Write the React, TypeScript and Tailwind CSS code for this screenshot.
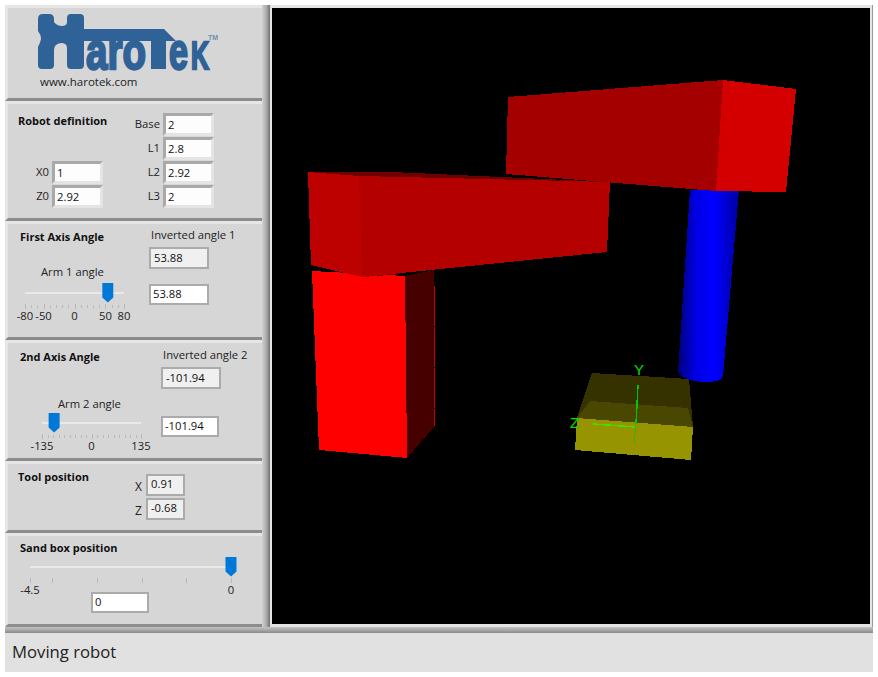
import React from "react";

const sans = "font-['Open_Sans',sans-serif]";

const Panel = ({ h, className = "", children }: { h: string; className?: string; children?: React.ReactNode }) => (
  <section
    className={`${h} ${className} relative border-t-[3px] border-l-[3px] border-b-[3px] border-t-[#e6e6e6] border-l-[#e6e6e6] border-b-[#8c8c8c] bg-[#d6d6d6]`}
  >
    {children}
  </section>
);

const Title = ({ className = "", children }: { className?: string; children: React.ReactNode }) => (
  <h3 className={`text-[11px] leading-[16px] font-bold whitespace-nowrap text-[#111] ${className}`}>{children}</h3>
);

// recessed numeric control
const Field = ({ label, value, labelW }: { label: string; value: string; labelW: string }) => (
  <div className="flex items-center h-[24px] shrink-0">
    <span className={`${labelW} text-right pr-[3px] text-[11.25px] text-[#222]`}>{label}</span>
    <div className="w-[51px] h-[23px] border-[3px] border-t-[#a9a9a9] border-l-[#a9a9a9] border-b-[#e4e4e4] border-r-[#e4e4e4] bg-[#fdfdfd] pl-[2px] text-[11.25px] leading-[17px] text-[#111]">
      {value}
    </div>
  </div>
);

const Readout = ({ value, className = "" }: { value: string; className?: string }) => (
  <div className={`border-2 border-[#ababab] bg-[#f0f0f0] pl-[3px] text-[11.25px] text-[#111] flex items-center ${className}`}>
    {value}
  </div>
);

const Entry = ({ value, className = "" }: { value: string; className?: string }) => (
  <div className={`border-2 border-[#ababab] bg-white pl-[2px] text-[11.25px] text-[#111] flex items-center ${className}`}>
    {value}
  </div>
);

type SliderProps = {
  width: number;
  min: number;
  max: number;
  value: number;
  ticks: number[];
  majors: number[];
  labels: { at: number; text: string }[];
};

const Slider = ({ width, min, max, value, ticks, majors, labels }: SliderProps) => {
  const pos = (v: number) => ((v - min) / (max - min)) * width;
  return (
    <div className="relative h-[40px]" style={{ width }}>
      <div className="absolute left-0 right-0 top-[9px] h-[2px] bg-[#e9e9e9]" />
      <svg className="absolute left-[-6px] top-0 z-10" style={{ transform: `translateX(${pos(value)}px)` }} width="12" height="20" viewBox="0 0 12 20">
        <path d="M0.5 0H11.5V14.5L6 19.5L0.5 14.5Z" fill="#0078d7" />
      </svg>
      {ticks.map((t) => (
        <div
          key={t}
          className={`absolute w-px bg-[#b9b9b9] ${majors.includes(t) ? "top-[21px] h-[5px]" : "top-[22px] h-[3px]"}`}
          style={{ left: pos(t) }}
        />
      ))}
      {labels.map((l) => (
        <span
          key={l.text}
          className="absolute top-[25px] -translate-x-1/2 text-[11.25px] leading-[16px] text-[#222]"
          style={{ left: pos(l.at) }}
        >
          {l.text}
        </span>
      ))}
    </div>
  );
};

const Logo = () => (
  <svg width="190" height="60" viewBox="38 12 190 60" className="block overflow-visible">
    <path
      d="M39 19Q39 14 44 14H50Q55 14 55 19V22Q58 26 63 26Q68 26 68 22V18Q68 14 72 14H81Q85 14 85 18V29H165L177 41H85V65Q85 69 81 69H72Q68 69 68 65V48Q68 43 62 43Q55 44 55 50V65Q55 69 51 69H43Q39 69 39 65V47Q42 41 42 38Q42 35 39 31Z"
      fill="#2f6397"
    />
    <rect x="152" y="38" width="15" height="31" fill="#2f6397" />
    <g fontFamily="'Liberation Sans',sans-serif" fontWeight="700" fill="#2f6397" stroke="#2f6397" strokeWidth="2.4">
      <text x="87" y="68.5" fontSize="52" textLength="60" lengthAdjust="spacingAndGlyphs">aro</text>
      <text x="170" y="68.5" fontSize="52" textLength="19" lengthAdjust="spacingAndGlyphs">e</text>
      <text x="192" y="68.5" fontSize="39" textLength="18" lengthAdjust="spacingAndGlyphs">K</text>
    </g>
    <text x="209" y="40" fontFamily="'Liberation Sans',sans-serif" fontWeight="700" fontSize="7" fill="#6f8fae">TM</text>
  </svg>
);

const Scene = () => (
  <svg width="598" height="616" viewBox="272 8 598 616" className="block" shapeRendering="crispEdges">
    <defs>
      <linearGradient id="cyl" x1="0" y1="0" x2="1" y2="0">
        <stop offset="0" stopColor="#00007a" />
        <stop offset="0.3" stopColor="#0000e6" />
        <stop offset="0.6" stopColor="#0000ff" />
        <stop offset="1" stopColor="#0000a0" />
      </linearGradient>
    </defs>

    {/* sand box */}
    <polygon points="592,373 689,379 693,427 691,460 575,450 577,418" fill="#353200" />
    <polygon points="590,401 688,408 693,427 577,418" fill="#4a4700" />
    <polygon points="577,418 693,427 691,460 575,450" fill="#969400" />
    <line x1="638" y1="385" x2="636" y2="424" stroke="#00c800" strokeWidth="1.5" />
    <line x1="636" y1="426" x2="634" y2="443" stroke="#38b000" strokeWidth="1" />
    <line x1="593" y1="424" x2="635" y2="427" stroke="#40e000" strokeWidth="1.5" />
    <g fontFamily="'Liberation Sans',sans-serif" fontSize="15" fill="#00e000">
      <text x="634" y="375">Y</text>
      <text x="570" y="428">Z</text>
    </g>

    {/* tool */}
    <path d="M690 190H739L723 376Q722 382 705 382Q682 381 678 372Z" fill="url(#cyl)" />

    {/* base column */}
    <polygon points="405,276 434,270 434,427 407,458" fill="#470000" />
    <polygon points="312,271 405,276 407,458 319,450" fill="#ff0000" />
    <line x1="434.5" y1="286" x2="434.5" y2="426" stroke="#c80000" strokeWidth="1" strokeDasharray="40 1" />

    {/* lower arm */}
    <polygon points="311,265 362,277 405,274 340,268" fill="#6a0000" />
    <polygon points="308,172 392,172 610,182 359,176" fill="#6e0000" />
    <polygon points="308,172 359,176 362,277 311,265" fill="#bd0000" />
    <polygon points="359,176 610,182 607,252 362,277" fill="#b50000" />

    {/* upper arm */}
    <polygon points="508,97 723,80 716,191 506,174" fill="#a50000" />
    <polygon points="723,80 796,89 786,192 716,191" fill="#d40000" />
  </svg>
);

const App = () => {
  return (
    <div className={`w-[878px] h-[677px] bg-white p-[5px] overflow-hidden ${sans}`}>
      <div className="flex h-[622px]">
        <div className="w-[257px] shrink-0 flex flex-col">
          <Panel h="h-[96px]" className="pl-[29px] pt-[4px]">
            <Logo />
            <p className="ml-[3px] mt-[3px] text-[11.5px] leading-[14px] text-[#222]">www.harotek.com</p>
          </Panel>

          <Panel h="h-[120px]" className="flex pt-[8px] pb-[10px]">
            <div className="w-[99px] shrink-0 flex flex-col justify-between">
              <Title className="pl-[10px] pt-[1px]">Robot definition</Title>
              <div>
                <Field label="X0" value="1" labelW="w-[44px]" />
                <Field label="Z0" value="2.92" labelW="w-[44px]" />
              </div>
            </div>
            <div>
              <Field label="Base" value="2" labelW="w-[56px]" />
              <Field label="L1" value="2.8" labelW="w-[56px]" />
              <Field label="L2" value="2.92" labelW="w-[56px]" />
              <Field label="L3" value="2" labelW="w-[56px]" />
            </div>
          </Panel>

          <Panel h="h-[119px]" className="flex pt-[3px]">
            <div className="w-[141px] shrink-0">
              <Title className="pl-[12px] pt-[2px]">First Axis Angle</Title>
              <p className="mt-[19px] pl-[33px] text-[11.25px] leading-[16px] text-[#222]">Arm 1 angle</p>
              <div className="pl-[17px] mt-[3px]">
                <Slider
                  width={99}
                  min={-80}
                  max={80}
                  value={53.88}
                  ticks={Array.from({ length: 17 }, (_, i) => -80 + i * 10)}
                  majors={[-80, -50, 0, 50, 80]}
                  labels={[
                    { at: -80, text: "-80" },
                    { at: -50, text: "-50" },
                    { at: 0, text: "0" },
                    { at: 50, text: "50" },
                    { at: 80, text: "80" },
                  ]}
                />
              </div>
            </div>
            <div>
              <p className="pl-[2px] text-[11.25px] leading-[16px] text-[#222]">Inverted angle 1</p>
              <Readout value="53.88" className="w-[60px] h-[22px] mt-[4px]" />
              <Entry value="53.88" className="w-[60px] h-[21px] mt-[15px]" />
            </div>
          </Panel>

          <Panel h="h-[121px]" className="flex pt-[4px]">
            <div className="w-[153px] shrink-0">
              <Title className="pl-[12px] pt-[2px]">2nd Axis Angle</Title>
              <p className="mt-[31px] pl-[50px] text-[11.25px] leading-[16px] text-[#222]">Arm 2 angle</p>
              <div className="pl-[34px] mt-[1px]">
                <Slider
                  width={99}
                  min={-135}
                  max={135}
                  value={-101.94}
                  ticks={Array.from({ length: 19 }, (_, i) => -135 + i * 15)}
                  majors={[-135, 0, 135]}
                  labels={[
                    { at: -135, text: "-135" },
                    { at: 0, text: "0" },
                    { at: 135, text: "135" },
                  ]}
                />
              </div>
            </div>
            <div>
              <p className="pl-[2px] text-[11.25px] leading-[16px] text-[#222]">Inverted angle 2</p>
              <Readout value="-101.94" className="w-[60px] h-[22px] mt-[4px]" />
              <Entry value="-101.94" className="w-[58px] h-[21px] mt-[27px]" />
            </div>
          </Panel>

          <Panel h="h-[72px]" className="flex pt-[5px]">
            <Title className="w-[127px] shrink-0 pl-[10px]">Tool position</Title>
            <div className="flex flex-col gap-[1px] pt-[4px]">
              {[
                { label: "X", value: "0.91" },
                { label: "Z", value: "-0.68" },
              ].map((row) => (
                <div key={row.label} className="flex items-center">
                  <span className="w-[11px] text-[12px] pt-[5px] text-[#222]">{row.label}</span>
                  <Readout value={row.value} className="w-[39px] h-[22px]" />
                </div>
              ))}
            </div>
          </Panel>

          <Panel h="h-[94px]" className="pt-[4px]">
            <Title className="pl-[12px]">Sand box position</Title>
            <div className="pl-[22px] mt-[1px]">
              <Slider
                width={201}
                min={-4.5}
                max={0}
                value={0}
                ticks={[-4.5, -4, -3, -2, -1, 0]}
                majors={[-4.5, -4, -3, -2, -1, 0]}
                labels={[
                  { at: -4.5, text: "-4.5" },
                  { at: 0, text: "0" },
                ]}
              />
            </div>
            <Entry value="0" className="w-[58px] h-[21px] ml-[83px] mt-[-5px]" />
          </Panel>
        </div>

        <div className="w-[8px] shrink-0 bg-gradient-to-r from-[#d0d0d0] via-[#b0b0b0] to-[#727272]" />

        <div className="flex-1 border-r border-[#999]">
          <div className="h-full bg-black border-t-[3px] border-b-[3px] border-l-2 border-r-2 border-[#e4e4e4] overflow-hidden">
            <Scene />
          </div>
        </div>
      </div>

      <div className="h-[6px] bg-gradient-to-b from-[#c4c4c4] via-[#a8a8a8] to-[#8a8a8a]" />

      <div className="h-[39px] bg-[#e1e1e1] pl-[7px] pb-[2px] flex items-center text-[16.7px] text-[#222]">Moving robot</div>
    </div>
  );
};

export default App;
